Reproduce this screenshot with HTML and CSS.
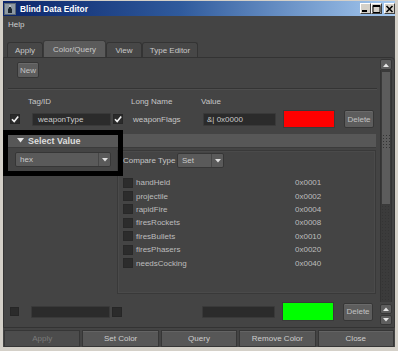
FILE: index.html
```html
<!DOCTYPE html>
<html lang="en">
<head>
    <meta charset="UTF-8">
    <title>Blind Data Editor</title>
    <link rel="stylesheet" href="styles.css">
</head>
<body>
    <div class="window">
        <!-- Title bar -->
        <div class="titlebar">
            <svg class="app-icon" viewBox="0 0 12 12">
                <rect x="0" y="0" width="12" height="12" fill="#5b6773"/>
                <rect x="1" y="1" width="10" height="10" fill="#8d99a4"/>
                <path d="M5 2 L7 2 L7 5 L8 6 L8 10 L4 10 L4 6 L5 5 Z" fill="#1d2731"/>
                <circle cx="6" cy="3" r="1" fill="#e8eef3"/>
            </svg>
            <span class="title">Blind Data Editor</span>
            <div class="win-buttons">
                <span class="win-btn">
                    <svg viewBox="0 0 9 8" width="9" height="8"><rect x="1" y="5" width="5" height="2" fill="#000"/></svg>
                </span>
                <span class="win-btn">
                    <svg viewBox="0 0 9 8" width="9" height="8"><path d="M1 0.5 H8 V7.5 H1 Z" fill="none" stroke="#000"/><rect x="1" y="0.5" width="7" height="1.5" fill="#000"/></svg>
                </span>
                <span class="win-btn close">
                    <svg viewBox="0 0 9 8" width="9" height="8"><path d="M1.5 1 L7.5 7 M7.5 1 L1.5 7" stroke="#000" stroke-width="1.6"/></svg>
                </span>
            </div>
        </div>

        <div class="body">
            <!-- Menu -->
            <div class="menubar"><span>Help</span></div>

            <!-- Tabs -->
            <div class="tabs">
                <div class="tab tab-apply">Apply</div>
                <div class="tab tab-color active">Color/Query</div>
                <div class="tab tab-view">View</div>
                <div class="tab tab-type">Type Editor</div>
            </div>

            <div class="tab-panel">
                <div class="content">
                    <div class="toolbar">
                        <button class="btn new-btn">New</button>
                    </div>
                    <div class="sep"></div>

                    <div class="labels">
                        <span class="lbl-tag">Tag/ID</span>
                        <span class="lbl-long">Long Name</span>
                        <span class="lbl-value">Value</span>
                    </div>

                    <div class="field-row">
                        <span class="check first">
                            <svg viewBox="0 0 10 10"><path d="M2 5.2 L4.2 7.6 L8.2 2.4" fill="none" stroke="#f2f2f2" stroke-width="1.6"/></svg>
                        </span>
                        <div class="field tag-field">weaponType</div>
                        <span class="check">
                            <svg viewBox="0 0 10 10"><path d="M2 5.2 L4.2 7.6 L8.2 2.4" fill="none" stroke="#f2f2f2" stroke-width="1.6"/></svg>
                        </span>
                        <span class="long-name">weaponFlags</span>
                        <div class="field value-field">&amp;| 0x0000</div>
                        <div class="swatch red"></div>
                        <button class="btn delete-btn">Delete</button>
                    </div>

                    <!-- Select Value -->
                    <div class="section-header">
                        <svg class="arrow-down" viewBox="0 0 7 5"><path d="M0 0 H7 L3.5 4.5 Z" fill="#e6e6e6"/></svg>
                        <span>Select Value</span>
                    </div>

                    <div class="lower">
                        <div class="left-col">
                            <div class="dropdown hex-dd">
                                <span class="dd-text">hex</span>
                                <span class="dd-arrow"><svg viewBox="0 0 6 4"><path d="M0 0 H6 L3 3.5 Z" fill="#e0e0e0"/></svg></span>
                            </div>
                        </div>
                        <div class="value-panel">
                            <div class="compare-row">
                                <span class="compare-label">Compare Type</span>
                                <div class="dropdown set-dd">
                                    <span class="dd-text">Set</span>
                                    <span class="dd-arrow"><svg viewBox="0 0 6 4"><path d="M0 0 H6 L3 3.5 Z" fill="#e0e0e0"/></svg></span>
                                </div>
                            </div>
                            <ul class="flag-list">
                                <li><span class="box"></span><span class="flag-name">handHeld</span><span class="flag-hex">0x0001</span></li>
                                <li><span class="box"></span><span class="flag-name">projectile</span><span class="flag-hex">0x0002</span></li>
                                <li><span class="box"></span><span class="flag-name">rapidFire</span><span class="flag-hex">0x0004</span></li>
                                <li><span class="box"></span><span class="flag-name">firesRockets</span><span class="flag-hex">0x0008</span></li>
                                <li><span class="box"></span><span class="flag-name">firesBullets</span><span class="flag-hex">0x0010</span></li>
                                <li><span class="box"></span><span class="flag-name">firesPhasers</span><span class="flag-hex">0x0020</span></li>
                                <li><span class="box"></span><span class="flag-name">needsCocking</span><span class="flag-hex">0x0040</span></li>
                            </ul>
                        </div>
                    </div>

                    <div class="field-row bottom-row">
                        <span class="check small first"></span>
                        <div class="field tag-field blank"></div>
                        <span class="check"></span>
                        <div class="field value-field blank spaced"></div>
                        <div class="swatch green"></div>
                        <button class="btn delete-btn">Delete</button>
                    </div>
                </div>

                <!-- Scrollbar -->
                <div class="scrollbar">
                    <div class="sb-btn top"><svg viewBox="0 0 6 4"><path d="M0 4 H6 L3 0.5 Z" fill="#e6e6e6"/></svg></div>
                    <div class="sb-track">
                        <div class="sb-thumb"><div class="grip"></div></div>
                    </div>
                    <div class="sb-btn up"><svg viewBox="0 0 6 4"><path d="M0 4 H6 L3 0.5 Z" fill="#e6e6e6"/></svg></div>
                    <div class="sb-btn down"><svg viewBox="0 0 6 4"><path d="M0 0 H6 L3 3.5 Z" fill="#e6e6e6"/></svg></div>
                </div>
            </div>

            <!-- Bottom buttons -->
            <div class="button-bar">
                <button class="bar-btn disabled">Apply</button>
                <button class="bar-btn">Set Color</button>
                <button class="bar-btn">Query</button>
                <button class="bar-btn">Remove Color</button>
                <button class="bar-btn">Close</button>
            </div>
        </div>

        <!-- annotation box -->
        <div class="highlight"></div>
    </div>
</body>
</html>
```

FILE: styles.css
```css
/* Reset */
* {
    margin: 0;
    padding: 0;
    box-sizing: border-box;
}

html, body {
    width: 398px;
    height: 351px;
    overflow: hidden;
}

body {
    font-family: "Liberation Sans", Arial, sans-serif;
    font-size: 8px;
    color: #c6c6c6;
    background: #d4d0c8;
}

button {
    font-family: inherit;
    font-size: 8px;
}

.window {
    position: relative;
    width: 398px;
    height: 351px;
    padding: 1px 3px 4px 3px;
    display: flex;
    flex-direction: column;
    background: #d4d0c8;
}

/* Title bar */
.titlebar {
    height: 15px;
    display: flex;
    align-items: center;
    padding-left: 1px;
    background: linear-gradient(to right, #0a246a 0%, #2f5a9c 45%, #a6caf0 100%);
}

.app-icon {
    width: 12px;
    height: 12px;
}

.title {
    margin-left: 4px;
    color: #fff;
    font-weight: bold;
    font-size: 8.4px;
}

.win-buttons {
    margin-left: auto;
    display: flex;
}

.win-btn {
    width: 11px;
    height: 11px;
    background: #d4d0c8;
    border: 1px solid;
    border-color: #fff #404040 #404040 #fff;
    display: flex;
    align-items: center;
    justify-content: center;
}

.win-btn.close {
    margin-left: 2px;
}

/* Body */
.body {
    flex: 1;
    background: #444;
    display: flex;
    flex-direction: column;
}

.menubar {
    height: 17px;
    padding-left: 5px;
    display: flex;
    align-items: center;
    color: #cfcfcf;
}

/* Tabs */
.tabs {
    margin-top: 8px;
    height: 16px;
    padding-left: 4px;
    display: flex;
    align-items: flex-end;
}

.tab {
    height: 15px;
    display: flex;
    align-items: center;
    justify-content: center;
    background: #474747;
    border: 1px solid #343434;
    border-bottom: none;
    border-radius: 3px 3px 0 0;
    color: #c8c8c8;
}

.tab-apply { width: 36px; }
.tab-color { width: 63px; }
.tab-view { width: 36px; }
.tab-type { width: 56px; }

.tab.active {
    height: 17px;
    background: #5b5b5b;
    border-color: #3a3a3a;
}

.tab-panel {
    height: 271px;
    display: flex;
    border: 1px solid #333;
    border-radius: 0 4px 0 0;
}

.content {
    flex: 1;
    padding-left: 4px;
    display: flex;
    flex-direction: column;
}

.toolbar {
    height: 30px;
    padding: 4px 0 0 9px;
}

.btn {
    background: #5d5d5d;
    border: 1px solid #363636;
    border-radius: 2px;
    color: #c2c2c2;
    box-shadow: inset 0 1px 0 #6a6a6a;
}

.new-btn {
    width: 22px;
    height: 16px;
}

.sep {
    height: 1px;
    margin-right: 1px;
    background: #343434;
    box-shadow: 0 1px 0 #4e4e4e;
}

.labels {
    height: 21px;
    padding: 7px 0 0 20px;
    line-height: 12px;
    display: flex;
}

.lbl-tag { width: 103px; }
.lbl-long { width: 70px; }

/* Field rows */
.field-row {
    height: 18px;
    display: flex;
    align-items: center;
}

.check {
    width: 10px;
    height: 10px;
    background: #2b2b2b;
    border: 1px solid #262626;
    margin-left: 2px;
    display: flex;
}

.check svg {
    width: 10px;
    height: 10px;
    margin: -1px;
}

.field {
    height: 13px;
    background: #2b2b2b;
    border: 1px solid #393939;
    border-radius: 1px;
    padding-left: 5px;
    line-height: 11px;
    color: #cacaca;
}

.tag-field {
    width: 79px;
    margin-left: 12px;
}

.long-name {
    width: 70px;
    margin-left: 10px;
}

.value-field {
    width: 73px;
    padding-left: 3px;
}

.swatch {
    width: 52px;
    height: 18px;
    margin-left: 7px;
    border: 1px solid #3a3a3a;
}

.swatch.red { background: #ff0000; }
.swatch.green { background: #00ff00; height: 19px; }

.delete-btn {
    width: 30px;
    height: 18px;
    margin-left: 9px;
}

/* Select Value */
.section-header {
    margin-top: 6px;
    margin-right: 2px;
    height: 14px;
    background: #575757;
    border-bottom: 1px solid #3b3b3b;
    padding-left: 9px;
    display: flex;
    align-items: center;
    font-weight: bold;
    font-size: 9px;
    color: #dedede;
}

.arrow-down {
    width: 7px;
    height: 5px;
    margin-right: 4px;
}

.lower {
    height: 147px;
    display: flex;
}

.left-col {
    width: 109px;
    padding: 4px 0 0 7px;
}

.dropdown {
    height: 15px;
    display: flex;
    background: #5a5a5a;
    border: 1px solid #363636;
    border-radius: 2px;
    color: #cacaca;
}

.dd-text {
    flex: 1;
    padding-left: 4px;
    line-height: 13px;
}

.dd-arrow {
    width: 12px;
    border-left: 1px solid #464646;
    display: flex;
    align-items: center;
    justify-content: center;
}

.dd-arrow svg {
    width: 6px;
    height: 4px;
}

.hex-dd {
    width: 96px;
}

.value-panel {
    width: 259px;
    height: 144px;
    margin-top: 2px;
    border: 1px solid #393939;
    box-shadow: inset 0 0 0 1px #4a4a4a;
}

.compare-row {
    margin-top: 2px;
    height: 15px;
    padding-left: 5px;
    display: flex;
    align-items: center;
}

.compare-label {
    width: 54px;
}

.set-dd {
    width: 47px;
}

.flag-list {
    list-style: none;
    margin-top: 8px;
}

.flag-list li {
    height: 13.4px;
    padding-left: 5px;
    display: flex;
    align-items: center;
    color: #bdbdbd;
}

.box {
    width: 10px;
    height: 10px;
    background: #2c2c2c;
    border: 1px solid #282828;
}

.flag-name {
    width: 159px;
    margin-left: 3px;
}

.bottom-row {
    margin-top: 7px;
    height: 19px;
}

.check.small {
    width: 9px;
    height: 9px;
}

.field.blank {
    height: 12px;
}

.field.spaced {
    margin-left: 80px;
}

/* Scrollbar */
.scrollbar {
    width: 12px;
    margin: 0 2px 0 2px;
    display: flex;
    flex-direction: column;
}

.sb-btn {
    height: 10px;
    background: #5e5e5e;
    border: 1px solid #363636;
    border-radius: 2px;
    display: flex;
    align-items: center;
    justify-content: center;
}

.sb-btn svg {
    width: 6px;
    height: 4px;
}

.sb-btn.top {
    margin-top: 1px;
    height: 11px;
}

.sb-btn.up {
    margin-top: 2px;
}

.sb-btn.down {
    margin-top: 1px;
    margin-bottom: 2px;
}

.sb-track {
    flex: 1;
    background: #3b3b3b;
    border-left: 1px solid #333;
    border-right: 1px solid #333;
    background-image: radial-gradient(#343434 0.6px, transparent 0.8px);
    background-size: 3px 3px;
}

.sb-thumb {
    margin-top: 1px;
    height: 134px;
    background: #5c5c5c;
    border: 1px solid #3a3a3a;
    display: flex;
    align-items: center;
    justify-content: center;
}

.grip {
    width: 8px;
    height: 16px;
    margin-top: 8px;
    background-image: radial-gradient(#333 0.8px, transparent 1px);
    background-size: 3px 3px;
}

/* Bottom buttons */
.button-bar {
    margin-top: 2px;
    height: 17px;
    padding: 0 1px;
    display: flex;
    gap: 2px;
}

.bar-btn {
    flex: 1;
    background: #575757;
    border: 1px solid #363636;
    box-shadow: inset 0 1px 0 #646464;
    color: #cdcdcd;
}

.bar-btn.disabled {
    background: #4c4c4c;
    color: #7a7a7a;
    box-shadow: none;
}

/* Annotation */
.highlight {
    position: absolute;
    left: 3px;
    top: 130px;
    width: 120px;
    height: 46px;
    border: 5px solid #000;
}
```
